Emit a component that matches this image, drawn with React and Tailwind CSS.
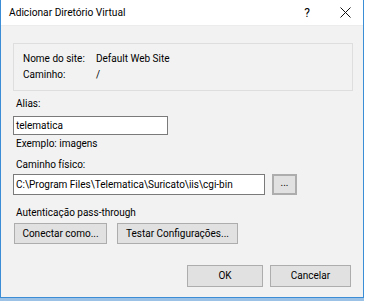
import React from "react";

const font = { fontFamily: 'Roboto, "Noto Sans", "Liberation Sans", sans-serif' };

function Btn({ children, className = "" }) {
  return (
    <button
      className={`flex items-center justify-center border border-[#adadad] bg-[#e1e1e1] text-[10px] leading-[12px] text-black ${className}`}
    >
      {children}
    </button>
  );
}

export default function App() {
  return (
    <div className="flex h-[301px] w-[366px] flex-col overflow-hidden bg-white text-[10px] leading-[12px] text-black" style={font}>
      <div className="flex h-[298px] w-[364px] shrink-0 flex-col border-x border-b border-[#3b8dd6] bg-[#f2f2f2]">
        {/* barra de título */}
        <div className="flex h-[26px] shrink-0 items-center border-b border-[#ececec] bg-white pl-[8px]">
          <span className="text-[10.2px]">Adicionar Diretório Virtual</span>
          <span className="ml-auto mr-[30px] text-[12px]">?</span>
          <svg width="11" height="11" viewBox="0 0 11 11" className="mr-[12px]">
            <path d="M0.5 0.5L10.5 10.5M10.5 0.5L0.5 10.5" stroke="#111" strokeWidth="1" />
          </svg>
        </div>

        <div className="flex flex-1 flex-col px-[12px] pt-[17px]">
          {/* informações do site */}
          <div className="flex h-[48px] w-[340px] flex-col justify-center gap-[4px] border border-[#dedede] pl-[9px]">
            <div className="flex">
              <span className="w-[73px]">Nome do site:</span>
              <span>Default Web Site</span>
            </div>
            <div className="flex">
              <span className="w-[73px]">Caminho:</span>
              <span>/</span>
            </div>
          </div>

          <div className="mt-[7px] pl-[3px]">Alias:</div>
          <div className="mt-[6px] flex h-[19px] w-[155px] items-center border border-[#7a7a7a] bg-white pl-[2px]">telematica</div>
          <div className="mt-[3px] pl-[3px]">Exemplo: imagens</div>

          <div className="mt-[9px] pl-[3px]">Caminho físico:</div>
          <div className="mt-[3px] flex items-center gap-[7px]">
            <div className="flex h-[21px] w-[252px] items-center border border-[#7a7a7a] bg-white pl-[2px]">
              C:\Program Files\Telematica\Suricato\iis\cgi-bin
            </div>
            <Btn className="h-[21px] w-[25px] border-2 border-[#0078d7] pb-[4px]">...</Btn>
          </div>

          <div className="mt-[12px] pl-[3px]">Autenticação pass-through</div>
          <div className="mt-[4px] flex gap-[10px] pl-[1px]">
            <Btn className="h-[21px] w-[93px]">Conectar como...</Btn>
            <Btn className="h-[21px] w-[121px]">Testar Configurações...</Btn>
          </div>

          <div className="mt-[21px] flex justify-end gap-[7px]">
            <Btn className="h-[22px] w-[76px]">OK</Btn>
            <Btn className="h-[22px] w-[81px]">Cancelar</Btn>
          </div>
        </div>
      </div>
      <div className="h-[3px] w-[364px] bg-[#9cc3e6]" />
    </div>
  );
}
